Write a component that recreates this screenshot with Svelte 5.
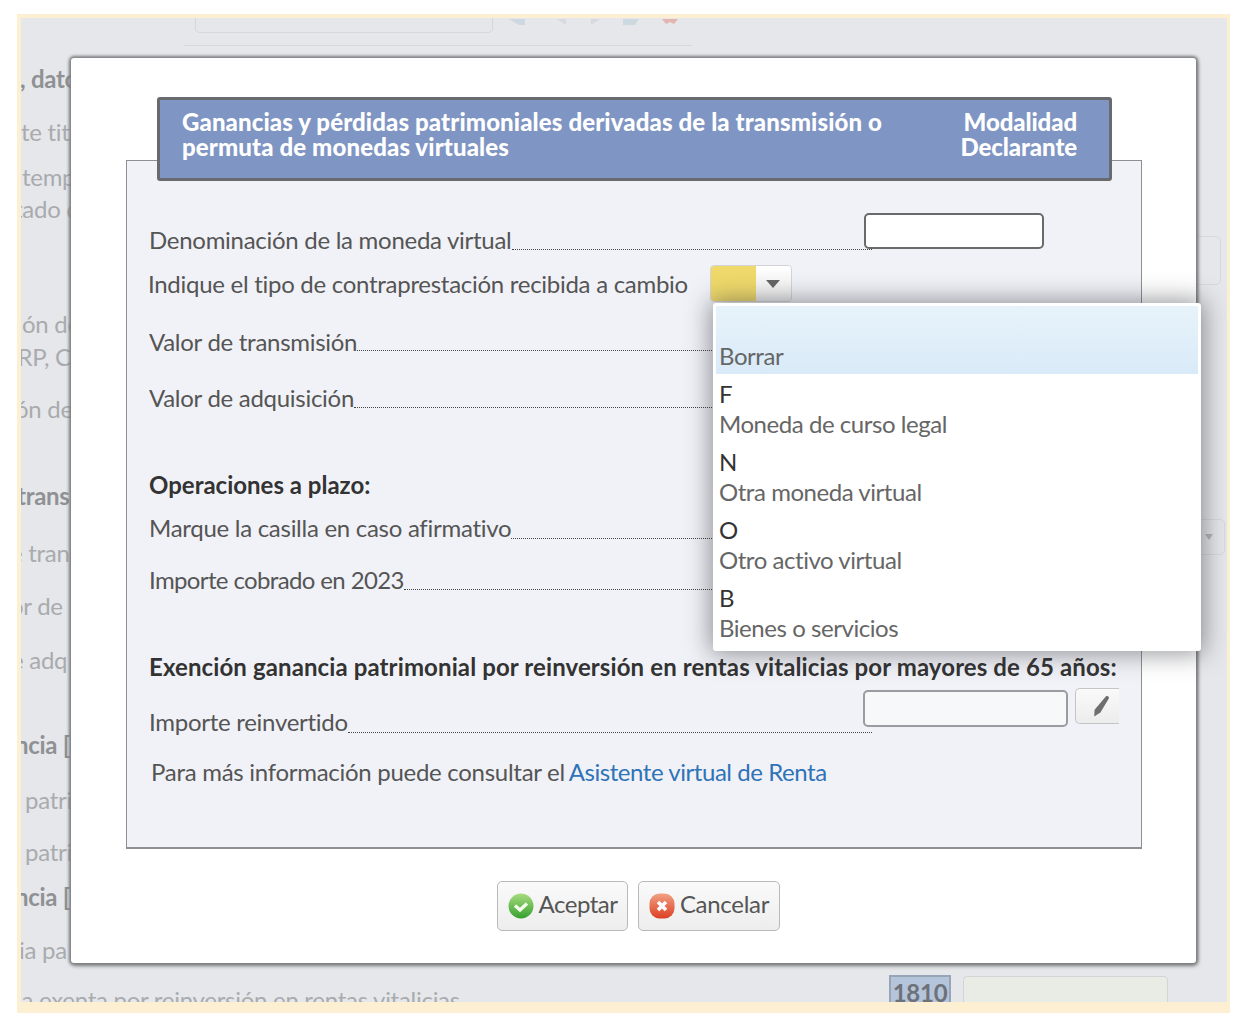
<script lang="ts">
	const bgLines = [
		{ text: ', datos', top: 64, left: 20, bold: true },
		{ text: 'nte titular', top: 117, left: 8, bold: false },
		{ text: 'temporal', top: 162, left: 22, bold: false },
		{ text: 'tado de', top: 194, left: 14, bold: false },
		{ text: 'ón de', top: 309, left: 22, bold: false },
		{ text: 'IRP, C', top: 342, left: 11, bold: false },
		{ text: 'ón de', top: 394, left: 15, bold: false },
		{ text: 'trans', top: 481, left: 17, bold: true },
		{ text: 'e tran', top: 538, left: 10, bold: false },
		{ text: 'or de', top: 591, left: 10, bold: false },
		{ text: 'e adq', top: 645, left: 11, bold: false },
		{ text: 'ncia [', top: 730, left: 15, bold: true },
		{ text: 'patri', top: 785, left: 25, bold: false },
		{ text: 'patri', top: 837, left: 25, bold: false },
		{ text: 'ncia [', top: 882, left: 15, bold: true },
		{ text: 'ia pa', top: 935, left: 19, bold: false }
	];

	const options = [
		{ code: '', label: 'Borrar' },
		{ code: 'F', label: 'Moneda de curso legal' },
		{ code: 'N', label: 'Otra moneda virtual' },
		{ code: 'O', label: 'Otro activo virtual' },
		{ code: 'B', label: 'Bienes o servicios' }
	];
</script>

<div class="frame">
	<div class="backdrop">
		{#each bgLines as line}
			<div
				class="bg-line"
				class:bold={line.bold}
				style="top:{line.top - 18}px;left:{line.left - 21}px"
			>
				{line.text}
			</div>
		{/each}
		<div class="bg-search"></div>
		<div class="bg-rule"></div>
		<div class="bg-tools">
			<svg width="190" height="8" viewBox="0 0 190 8">
				<path d="M4 0l10 6h6V0z" fill="#cdd8e1" />
				<path d="M52 0l9 6V0z" fill="#d4dadf" />
				<path d="M86 0v6l9-6z" fill="#d4dadf" />
				<path d="M118 0v6h12l4-6z" fill="#cdd8e1" />
				<path d="M157 0l4 5 4-2 4 2 4-5z" fill="#e3b5ae" />
			</svg>
		</div>
		<div class="bg-box one"></div>
		<div class="bg-box two"><span class="bg-arrow"></span></div>
		<div class="bg-bottom">ia exenta por reinversión en rentas vitalicias</div>
		<div class="bg-code">1810</div>
		<div class="bg-field"></div>
	</div>

	<div class="modal">
		<div class="panel">
			<div class="head">
				<div class="head-title">
					Ganancias y pérdidas patrimoniales derivadas de la transmisión o permuta de monedas virtuales
				</div>
				<div class="head-mode">Modalidad<br />Declarante</div>
			</div>

			<div class="row first">
				<span class="label">Denominación de la moneda virtual</span>
				<span class="leader"></span>
				<input class="text-input" type="text" />
			</div>

			<div class="row kind">
				<span class="label">Indique el tipo de contraprestación recibida a cambio</span>
				<div class="select">
					<span class="select-value"></span>
					<span class="select-btn"><span class="tri"></span></span>
				</div>
			</div>

			<div class="row value-a">
				<span class="label">Valor de transmisión</span>
				<span class="leader"></span>
			</div>
			<div class="row value-b">
				<span class="label">Valor de adquisición</span>
				<span class="leader"></span>
			</div>

			<div class="section ops">Operaciones a plazo:</div>
			<div class="row mark">
				<span class="label">Marque la casilla en caso afirmativo</span>
				<span class="leader"></span>
			</div>
			<div class="row paid">
				<span class="label">Importe cobrado en 2023</span>
				<span class="leader"></span>
			</div>

			<div class="section exempt">
				Exención ganancia patrimonial por reinversión en rentas vitalicias por mayores de 65 años:
			</div>
			<div class="row reinv">
				<span class="label">Importe reinvertido</span>
				<span class="leader"></span>
				<input class="text-input soft" type="text" />
				<button class="pencil" aria-label="Editar">
					<svg width="20" height="24" viewBox="0 0 20 24">
						<path d="M15 2.2c1.6-1 3.6.6 2.7 2.5L9.4 18.6 3.2 22.6l.4-6.8z" fill="#6e6e6e" />
					</svg>
				</button>
			</div>

			<div class="info">
				Para más información puede consultar el
				<a href="#asistente">Asistente virtual de Renta</a>
			</div>
		</div>

		<div class="actions">
			<button class="btn accept">
				<svg width="26" height="26" viewBox="0 0 26 26">
					<defs>
						<linearGradient id="ok" x1="0" y1="0" x2="0" y2="1">
							<stop offset="0" stop-color="#a8dc80" />
							<stop offset="1" stop-color="#36a030" />
						</linearGradient>
					</defs>
					<circle cx="13" cy="13" r="12.5" fill="url(#ok)" />
					<path d="M7 12.5l5 4.5 7-6.5" fill="none" stroke="#f2fbe8" stroke-width="3.4" />
				</svg>
				<span class="btn-text">Aceptar</span>
			</button>
			<button class="btn cancel">
				<svg width="26" height="26" viewBox="0 0 26 26">
					<defs>
						<linearGradient id="ko" x1="0" y1="0" x2="0" y2="1">
							<stop offset="0" stop-color="#f2a184" />
							<stop offset="1" stop-color="#dc3f22" />
						</linearGradient>
					</defs>
					<rect x="0.5" y="0.5" width="25" height="25" rx="10" fill="url(#ko)" />
					<path d="M9 9l8 8M17 9l-8 8" fill="none" stroke="#fff" stroke-width="3.6" />
				</svg>
				<span class="btn-text">Cancelar</span>
			</button>
		</div>
	</div>

	<ul class="menu">
		{#each options as opt, i}
			<li class="option" class:active={i === 0}>
				<span class="code">{opt.code}</span>
				<span class="desc">{opt.label}</span>
			</li>
		{/each}
	</ul>
</div>

<style>
	:global(body) {
		background: #fff;
		font-family: Lato, 'Noto Sans', sans-serif;
	}

	.frame {
		position: relative;
		box-sizing: border-box;
		width: 1213px;
		height: 999px;
		margin: 14px 0 0 17px;
		border: solid #fdf0d2;
		border-width: 4px 3px 11px 4px;
		background: #e5e7ea;
		overflow: hidden;
		letter-spacing: -0.28px;
	}

	.backdrop {
		position: absolute;
		inset: 0;
		overflow: hidden;
		color: #a9abae;
		font-size: 24px;
		line-height: 30px;
	}

	.bg-line {
		position: absolute;
		white-space: nowrap;
	}

	.bold {
		font-weight: 700;
		color: #8f9194;
	}

	.bg-search {
		position: absolute;
		left: 174px;
		top: -20px;
		width: 296px;
		height: 33px;
		border: 1px solid #d5d7da;
		border-radius: 5px;
	}

	.bg-rule {
		position: absolute;
		left: 163px;
		top: 27px;
		width: 508px;
		height: 1px;
		background: #d6d8db;
	}

	.bg-tools {
		position: absolute;
		left: 484px;
		top: 0;
		line-height: 0;
	}

	.bg-box {
		position: absolute;
		border: 1px solid #d7d9dc;
		border-radius: 5px;
		box-sizing: border-box;
	}

	.bg-box.one {
		left: 1148px;
		top: 218px;
		width: 52px;
		height: 49px;
	}

	.bg-box.two {
		left: 1148px;
		top: 501px;
		width: 56px;
		height: 36px;
	}

	.bg-arrow {
		position: absolute;
		right: 11px;
		top: 14px;
		border: solid transparent;
		border-width: 6px 4px 0;
		border-top-color: #b5b7ba;
	}

	.bg-bottom {
		position: absolute;
		left: -5px;
		top: 967px;
		white-space: nowrap;
	}

	.bg-code {
		position: absolute;
		left: 868px;
		top: 957px;
		box-sizing: border-box;
		width: 62px;
		height: 40px;
		padding-top: 1px;
		border: 2px solid #98a5b5;
		background: #b4c4da;
		color: #6d7178;
		font-weight: 700;
		text-align: center;
	}

	.bg-field {
		position: absolute;
		left: 942px;
		top: 958px;
		width: 203px;
		height: 40px;
		border: 1px solid #d2d4d5;
		border-radius: 4px;
		background: #e9ebe5;
	}

	.modal {
		position: absolute;
		left: 50px;
		top: 40px;
		box-sizing: border-box;
		width: 1125px;
		height: 905px;
		padding: 102px 54px 0 55px;
		border-radius: 3px;
		background: #fff;
		box-shadow: 0 0 3px 2px #7f8082, 1px 2px 5px #6f7072;
		color: #555;
		font-size: 24px;
	}

	.panel {
		box-sizing: border-box;
		height: 689px;
		padding: 0 24px 0 22px;
		border: 1px solid #8d8f92;
		border-bottom-width: 2px;
		background: #f1f2f7;
	}

	.head {
		display: flex;
		justify-content: space-between;
		box-sizing: border-box;
		width: 955px;
		height: 84px;
		margin: -64px 0 0 8px;
		padding: 9px 32px 0 22px;
		border: 3px solid #696a6e;
		border-radius: 3px;
		background: #7f95c3;
		color: #fff;
		font-weight: 900;
		line-height: 25px;
		letter-spacing: -0.1px;
	}

	.head-title {
		width: 730px;
		letter-spacing: 0.12px;
	}

	.head-mode {
		text-align: right;
	}

	.row {
		display: flex;
		align-items: flex-end;
		line-height: 30px;
	}

	.label {
		white-space: nowrap;
	}

	.leader {
		position: relative;
		z-index: 1;
		flex-grow: 1;
		margin-bottom: 5px;
		border-bottom: 1px dotted #444;
	}

	.first {
		position: relative;
		width: 723px;
		margin-top: 44px;
	}

	.text-input {
		position: absolute;
		left: 715px;
		bottom: 6px;
		box-sizing: border-box;
		width: 180px;
		height: 36px;
		border: 2px solid #6a6a6a;
		border-radius: 5px;
		background: #fff;
	}

	.kind {
		align-items: center;
		margin: 10px 0 0 -1px;
	}

	.select {
		display: flex;
		box-sizing: border-box;
		width: 82px;
		height: 37px;
		margin-left: 22px;
		border: 1px solid #d3d4d6;
		border-radius: 4px;
		overflow: hidden;
	}

	.select-value {
		width: 45px;
		background: #efd96a;
	}

	.select-btn {
		flex: 1;
		display: flex;
		align-items: center;
		justify-content: center;
		background: linear-gradient(#fff, #eeeeee);
	}

	.tri {
		border: solid transparent;
		border-width: 8px 7px 0;
		border-top-color: #666;
	}

	.value-a,
	.value-b,
	.mark,
	.paid,
	.reinv {
		width: 723px;
	}

	.value-a {
		margin-top: 25px;
	}

	.value-a .leader {
		margin-bottom: 6px;
	}

	.value-b {
		margin-top: 26px;
	}

	.section {
		color: #333;
		font-weight: 700;
		line-height: 30px;
		letter-spacing: 0;
	}

	.ops {
		margin-top: 57px;
	}

	.mark {
		margin-top: 13px;
	}

	.mark .leader {
		margin-bottom: 4px;
	}

	.paid {
		margin-top: 22px;
	}

	.paid .label {
		letter-spacing: -0.63px;
	}

	.exempt {
		margin-top: 57px;
		white-space: nowrap;
		letter-spacing: 0.11px;
	}

	.reinv {
		position: relative;
		margin-top: 25px;
	}

	.reinv .leader {
		margin-bottom: 4px;
	}

	.text-input.soft {
		left: 714px;
		bottom: 10px;
		width: 205px;
		height: 37px;
		border-color: #9a9c9f;
		background: #f7f8fa;
	}

	.pencil {
		position: absolute;
		left: 926px;
		bottom: 13px;
		box-sizing: border-box;
		width: 44px;
		height: 36px;
		padding: 0 0 0 6px;
		border: 1px solid #c4c5c7;
		border-right: 0;
		border-radius: 5px 0 0 5px;
		background: linear-gradient(#fafafa, #ececec);
		line-height: 0;
	}

	.info {
		margin: 20px 0 0 2px;
		line-height: 30px;
	}

	.info a {
		margin-left: -2px;
		color: #2f73b8;
		text-decoration: none;
		letter-spacing: -0.45px;
	}

	.actions {
		display: flex;
		justify-content: center;
		gap: 10px;
		margin: 32px 0 0 9px;
	}

	.btn {
		display: flex;
		align-items: center;
		justify-content: center;
		gap: 5px;
		box-sizing: border-box;
		height: 50px;
		padding: 0;
		border: 1px solid #b9b9b9;
		border-radius: 5px;
		background: linear-gradient(#fafafa, #ededed);
		color: #555;
		font: inherit;
		letter-spacing: -0.3px;
	}

	.btn-text {
		padding-bottom: 6px;
	}

	.accept {
		width: 131px;
		letter-spacing: -0.5px;
	}

	.cancel {
		width: 142px;
	}

	.menu {
		position: absolute;
		z-index: 2;
		left: 692px;
		top: 285px;
		box-sizing: border-box;
		width: 488px;
		height: 348px;
		margin: 0;
		padding: 3px;
		list-style: none;
		border-radius: 3px;
		background: #fff;
		box-shadow: 0 0 24px 3px rgba(50, 52, 60, 0.5);
		color: #666;
		font-size: 24px;
		line-height: 30px;
		letter-spacing: -0.45px;
	}

	.option {
		box-sizing: border-box;
		height: 68px;
		padding: 5px 3px 0;
	}

	.option.active {
		background: linear-gradient(#e7f3fa, #d9eaf8);
	}

	.code,
	.desc {
		display: block;
		height: 30px;
	}

	.code {
		color: #333;
	}
</style>
